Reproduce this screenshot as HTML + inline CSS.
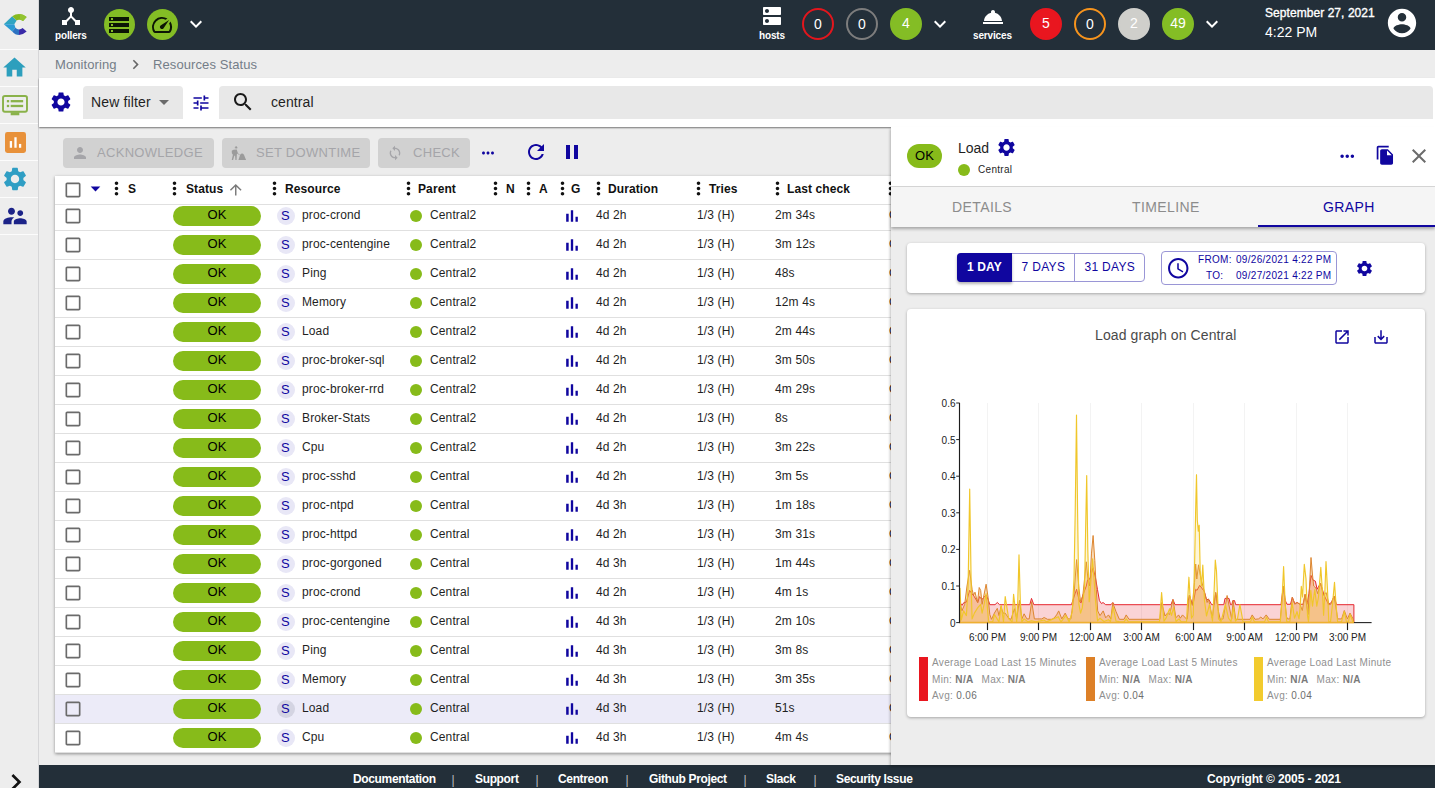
<!DOCTYPE html>
<html>
<head>
<meta charset="utf-8">
<title>Resources Status</title>
<style>
*{box-sizing:border-box;margin:0;padding:0}
html,body{width:1435px;height:788px;overflow:hidden;background:#ededed;font-family:"Liberation Sans",sans-serif;color:#242f3a}
.abs{position:absolute}
svg{display:block;position:absolute}
.t{position:absolute;white-space:nowrap;line-height:1}
/* sidebar */
#side{overflow:hidden;position:absolute;left:0;top:0;width:39px;height:788px;background:#ededed;border-right:1px solid #d6d6d8}
#side .sep{position:absolute;left:0;width:38px;height:1px;background:#fcfcfc}
/* header */
#hdr{position:absolute;left:39px;top:0;width:1396px;height:50px;background:#232f39}
.hl{color:#fff;font-size:10px;font-weight:700;letter-spacing:-.15px}
.cnt{position:absolute;width:32px;height:32px;border-radius:50%;color:#fff;font-size:14px;text-align:center;line-height:28px;border:2px solid transparent}
/* breadcrumb */
#bc{position:absolute;left:39px;top:50px;width:1396px;height:27px;background:#ededed}
#bc .t{font-size:13px;color:#747d88;letter-spacing:.1px}
/* filter */
#flt{position:absolute;left:39px;top:77.5px;width:1396px;height:49.5px;background:#fff;box-shadow:0 1px 1.5px rgba(0,0,0,.5)}
/* actions */
.btn{position:absolute;top:138px;height:30px;background:#d1d1d1;border-radius:4px}
.btn .t{font-size:13px;letter-spacing:.3px;color:#a5a5a9;top:7.5px}
/* table */
#tbl{position:absolute;left:55px;top:176px;width:840px;height:576.5px;background:#fff;box-shadow:0 1px 3px rgba(0,0,0,.4);overflow:hidden}
.row{position:absolute;left:0;width:840px;height:29px;border-bottom:1px solid #e0e0e0;background:#fff;font-size:12px;letter-spacing:.128px;color:#1f1f1f}
.row.sel{background:#ecebf8}
.row .t{top:7px}
.ok{position:absolute;left:118px;top:4px;width:88px;height:20px;border-radius:10px;background:#87bb1a;color:#000;font-size:13px;text-align:center;line-height:18px;letter-spacing:0}
.sc{position:absolute;left:221.5px;top:5px;width:18px;height:18px;border-radius:50%;background:#e8e7f6;color:#10069f;font-size:13px;text-align:center;line-height:17px;letter-spacing:0;text-indent:-.5px}
.row.sel .sc{background:#d4d4e2}
.dot{position:absolute;left:355px;top:8px;width:12px;height:12px;border-radius:50%;background:#87bb1a}
#th{position:absolute;left:0;top:0;width:840px;height:29px;background:#fff;border-bottom:1px solid #e0e0e0;z-index:2;font-size:12px;font-weight:700;color:#111}
#th .t{top:7px;letter-spacing:.1px}
/* panel */
#pnl{z-index:5;position:absolute;left:891px;top:127px;width:544px;height:638px;background:#ededed;box-shadow:-1px 2px 2.5px rgba(0,0,0,.25)}
#ph{position:absolute;left:0;top:0;width:544px;height:60px;background:#fff;border-bottom:1px solid #d8d8d8}
#tabs{position:absolute;left:0;top:60px;width:544px;height:40px;background:#f5f5f5;box-shadow:0 2px 3px rgba(0,0,0,.3)}
#tabs .t{font-size:14px;letter-spacing:.4px;color:#8c8c8c;top:13px}
.card{position:absolute;background:#fff;border-radius:4px;box-shadow:0 1px 3px rgba(0,0,0,.3)}
.lg{position:absolute;top:528.4px;font-size:10px;letter-spacing:.33px;line-height:16.5px;color:#8f8f8f;white-space:nowrap}
.lg b{color:#7a7a7a}
/* footer */
#ftr{position:absolute;left:39px;top:765px;width:1396px;height:23px;background:#232f39;color:#fff;font-weight:700;font-size:12px}
#ftr .t{top:8px;letter-spacing:-.35px}
</style>
</head>
<body>
<!--SIDEBAR-->
<div id="side">
  <!-- logo -->
  <svg style="left:0;top:0" width="39" height="49" viewBox="0 0 39 49"><path d="M3.81 24.37 L12.19 16.22 L16.60 20.56 L14.32 24.37 Z" fill="#2fa4c2"/><path d="M3.81 24.37 L14.32 24.37 L15.46 27.80 L12.19 31.38 Z" fill="#2a9bd4"/><path d="M12.19 31.38 L15.46 27.80 Q16.91 29.32 19.04 29.40 L19.04 34.88 Q15.23 34.88 12.19 31.38 Z" fill="#2d72c2"/><path d="M19.04 29.40 Q21.17 29.40 22.62 28.03 L26.66 31.61 Q23.23 34.88 19.04 34.88 Z" fill="#3a2aa8"/><path d="M12.19 16.22 Q15.23 13.94 19.04 13.94 Q23.23 13.94 26.66 16.91 L23.08 21.10 Q21.33 19.65 19.04 19.65 Q17.67 19.65 16.60 20.56 Z" fill="#86b91f"/><path d="M19.95 13.94 Q23.76 14.24 26.66 16.91 L23.08 21.10 Q21.71 19.80 19.95 19.65 Z" fill="#93c431"/></svg>
  <div class="sep" style="top:49px"></div>
  <!-- home -->
  <svg style="left:1.200px;top:53.700px" width="27" height="27" viewBox="0 0 24 24"><path fill="#2d9fbd" d="M10 20v-6h4v6h5v-8h3L12 3 2 12h3v8z"/></svg>
  <div class="sep" style="top:86px"></div>
  <!-- monitoring -->
  <svg style="left:2px;top:93.500px" width="26" height="23" viewBox="0 0 27 24">
    <rect x="1" y="2" width="25" height="16.5" rx="2" fill="none" stroke="#8ab24a" stroke-width="2"/>
    <rect x="9" y="19" width="9" height="3.2" fill="#8ab24a"/>
    <rect x="5" y="6.300" width="2.400" height="2.400" fill="#8ab24a"/><rect x="9" y="6.300" width="13" height="2.400" fill="#8ab24a"/>
    <rect x="5" y="11.300" width="2.400" height="2.400" fill="#8ab24a"/><rect x="9" y="11.300" width="13" height="2.400" fill="#8ab24a"/>
  </svg>
  <div class="sep" style="top:123px"></div>
  <!-- reporting -->
  <svg style="left:4.500px;top:131.500px" width="21" height="21" viewBox="0 0 22 22">
    <rect x="0" y="0" width="22" height="22" rx="2.500" fill="#e8913a"/>
    <rect x="5" y="9.500" width="2.400" height="7" fill="#fff"/><rect x="9.800" y="5.500" width="2.400" height="11" fill="#fff"/><rect x="14.600" y="12.500" width="2.400" height="4" fill="#fff"/>
  </svg>
  <div class="sep" style="top:160px"></div>
  <!-- config -->
  <svg style="left:1px;top:165px" width="28" height="28" viewBox="0 0 24 24"><path fill="#2f9ec4" d="M19.14 12.94c.04-.3.06-.61.06-.94 0-.32-.02-.64-.07-.94l2.03-1.58c.18-.14.23-.41.12-.61l-1.92-3.32c-.12-.22-.37-.29-.59-.22l-2.39.96c-.5-.38-1.03-.7-1.62-.94l-.36-2.54c-.04-.24-.24-.41-.48-.41h-3.84c-.24 0-.43.17-.47.41l-.36 2.54c-.59.24-1.13.57-1.62.94l-2.39-.96c-.22-.08-.47 0-.59.22L2.74 8.870c-.12.21-.08.47.12.61l2.030 1.580c-.05.3-.09.63-.09.94s.02.640.07.940l-2.030 1.580c-.18.140-.23.410-.12.610l1.920 3.320c.12.220.37.290.59.220l2.390-.960c.5.380 1.030.7 1.620.940l.36 2.540c.05.240.24.410.48.410h3.840c.24 0 .44-.170.470-.410l.36-2.540c.590-.240 1.130-.560 1.620-.940l2.390.960c.22.080.47 0 .59-.220l1.920-3.320c.12-.220.070-.470-.12-.610l-2.010-1.580zM12 15.600c-1.980 0-3.600-1.620-3.600-3.600s1.620-3.600 3.600-3.600 3.600 1.620 3.600 3.600-1.620 3.600-3.600 3.600z"/></svg>
  <div class="sep" style="top:197px"></div>
  <!-- admin -->
  <svg style="left:1px;top:202px" width="28" height="28" viewBox="0 0 24 24"><path fill="#1c2388" d="M16.500 12c1.380 0 2.490-1.120 2.490-2.500S17.880 7 16.500 7C15.120 7 14 8.120 14 9.500s1.120 2.500 2.500 2.500zM9 11c1.660 0 2.990-1.340 2.990-3S10.660 5 9 5C7.340 5 6 6.340 6 8s1.340 3 3 3zm7.500 3c-1.830 0-5.500.920-5.500 2.750V19h11v-2.250c0-1.830-3.670-2.750-5.500-2.750zM9 13c-2.330 0-7 1.170-7 3.500V19h7v-2.250c0-.850.330-2.340 2.370-3.470C10.500 13.100 9.660 13 9 13z"/></svg>
  <div class="sep" style="top:234px"></div>
  <!-- expand chevron -->
  <svg style="left:-.4px;top:765.500px" width="32" height="32" viewBox="0 0 24 24"><path fill="#111" d="M10 6L8.590 7.410 13.170 12l-4.580 4.590L10 18l6-6z"/></svg>
</div>

<!--HEADER-->
<div id="hdr">
  <!-- pollers -->
  <svg style="left:20px;top:4px" width="24" height="24" viewBox="0 0 24 24"><path fill="#fff" d="M17 16l-4-4V8.820C14.160 8.400 15 7.300 15 6c0-1.660-1.340-3-3-3S9 4.340 9 6c0 1.300.840 2.400 2 2.820V12l-4 4H3v5h5v-3.050l4-4.200 4 4.200V21h5v-5h-4z"/></svg>
  <span class="t hl" style="left:16px;top:30.500px">pollers</span>
  <div class="abs" style="left:65px;top:9px;width:31px;height:31px;border-radius:50%;background:#84bd25"></div>
  <svg style="left:68px;top:12.500px" width="24" height="24" viewBox="0 0 24 24"><path fill="#0c1505" d="M2 20h20v-4H2v4zm2-3h2v2H4v-2zM2 4v4h20V4H2zm4 3H4V5h2v2zm-4 7h20v-4H2v4zm2-3h2v2H4v-2z"/></svg>
  <div class="abs" style="left:108px;top:9px;width:31px;height:31px;border-radius:50%;background:#84bd25"></div>
  <svg style="left:111px;top:13.200px" width="24" height="24" viewBox="0 0 24 24"><path fill="#0c1505" d="M20.380 8.570l-1.230 1.850a8 8 0 0 1-.220 7.580H5.070A8 8 0 0 1 15.580 6.850l1.850-1.230A10 10 0 0 0 3.350 19a2 2 0 0 0 1.720 1h13.850a2 2 0 0 0 1.740-1 10 10 0 0 0-.270-10.440zm-9.790 6.840a2 2 0 0 0 2.830 0l5.660-8.490-8.490 5.660a2 2 0 0 0 0 2.830z"/></svg>
  <svg style="left:145px;top:12px" width="24" height="24" viewBox="0 0 24 24"><path fill="#fff" d="M16.590 8.590L12 13.170 7.410 8.590 6 10l6 6 6-6z"/></svg>
  <!-- hosts -->
  <svg style="left:721px;top:4px" width="24" height="24" viewBox="0 0 24 24"><path fill="#fff" d="M20 13H4c-.550 0-1 .450-1 1v6c0 .550.450 1 1 1h16c.550 0 1-.450 1-1v-6c0-.550-.450-1-1-1zM7 19c-1.100 0-2-.900-2-2s.900-2 2-2 2 .900 2 2-.900 2-2 2zM20 3H4c-.550 0-1 .450-1 1v6c0 .550.450 1 1 1h16c.550 0 1-.450 1-1V4c0-.550-.450-1-1-1zM7 9c-1.100 0-2-.900-2-2s.900-2 2-2 2 .900 2 2-.900 2-2 2z"/></svg>
  <span class="t hl" style="left:720px;top:30.500px">hosts</span>
  <div class="cnt" style="left:763px;top:8px;border-color:#e3161d">0</div>
  <div class="cnt" style="left:807px;top:8px;border-color:#7d7d7d">0</div>
  <div class="cnt" style="left:851px;top:8px;line-height:26px;background:#84bd25;border-color:#84bd25">4</div>
  <svg style="left:889px;top:12px" width="24" height="24" viewBox="0 0 24 24"><path fill="#fff" d="M16.590 8.590L12 13.170 7.410 8.590 6 10l6 6 6-6z"/></svg>
  <!-- services -->
  <svg style="left:942px;top:5px" width="24" height="24" viewBox="0 0 24 24"><path fill="#fff" d="M2 17h20v2H2zm11.840-9.210c.100-.240.160-.510.160-.790 0-1.100-.900-2-2-2s-2 .900-2 2c0 .280.060.550.160.790C6.250 8.600 3.270 11.930 3 16h18c-.270-4.070-3.250-7.400-7.160-8.210z"/></svg>
  <span class="t hl" style="left:934px;top:30.500px">services</span>
  <div class="cnt" style="left:991px;top:8px;line-height:26px;background:#e9161f;border-color:#e9161f">5</div>
  <div class="cnt" style="left:1035px;top:8px;border-color:#f7941d">0</div>
  <div class="cnt" style="left:1079px;top:8px;line-height:26px;background:#cfcfcb;border-color:#cfcfcb">2</div>
  <div class="cnt" style="left:1123px;top:8px;line-height:26px;background:#84bd25;border-color:#84bd25">49</div>
  <svg style="left:1161px;top:12px" width="24" height="24" viewBox="0 0 24 24"><path fill="#fff" d="M16.590 8.590L12 13.170 7.410 8.590 6 10l6 6 6-6z"/></svg>
  <!-- clock -->
  <span class="t" style="left:1226px;top:7px;font-size:12px;color:#fff;letter-spacing:.06px;-webkit-text-stroke:.35px #fff">September 27, 2021</span>
  <span class="t" style="left:1226px;top:25px;font-size:14px;color:#fff">4:22 PM</span>
  <svg style="left:1345.500px;top:5.500px" width="34" height="34" viewBox="0 0 24 24"><path fill="#fff" d="M12 2C6.480 2 2 6.480 2 12s4.480 10 10 10 10-4.480 10-10S17.520 2 12 2zm0 3c1.660 0 3 1.340 3 3s-1.340 3-3 3-3-1.340-3-3 1.340-3 3-3zm0 14.200c-2.500 0-4.710-1.280-6-3.220.030-1.990 4-3.080 6-3.080 1.990 0 5.970 1.090 6 3.080-1.290 1.940-3.500 3.220-6 3.220z"/></svg>
</div>

<!--BREADCRUMB-->
<div id="bc">
  <span class="t" style="left:16px;top:8px">Monitoring</span>
  <svg style="left:86.500px;top:4.500px" width="19" height="19" viewBox="0 0 24 24"><path fill="#666" d="M10 6L8.59 7.41 13.17 12l-4.58 4.59L10 18l6-6z"/></svg>
  <span class="t" style="left:114px;top:8px">Resources Status</span>
</div>
<!--FILTER-->
<div id="flt">
  <svg style="left:10px;top:12.5px" width="24" height="24" viewBox="0 0 24 24"><path fill="#10069f" d="M19.140 12.940c.040-.3.060-.610.060-.940 0-.320-.020-.640-.070-.940l2.030-1.580c.18-.14.23-.41.12-.61l-1.920-3.320c-.12-.22-.37-.29-.59-.22l-2.390.96c-.5-.38-1.030-.7-1.620-.94l-.36-2.540c-.04-.24-.24-.41-.48-.41h-3.840c-.24 0-.43.17-.47.41l-.36 2.540c-.59.24-1.130.57-1.620.94l-2.390-.96c-.22-.08-.47 0-.59.22L2.740 8.870c-.12.21-.08.47.12.61l2.030 1.580c-.05.3-.09.63-.09.94s.02.64.07.94l-2.030 1.580c-.18.14-.23.41-.12.610l1.920 3.320c.12.220.37.290.59.220l2.390-.960c.5.380 1.030.7 1.620.940l.36 2.540c.05.240.24.410.48.410h3.840c.24 0 .44-.170.470-.410l.36-2.540c.590-.240 1.130-.560 1.620-.940l2.390.960c.22.080.47 0 .59-.220l1.920-3.320c.12-.220.070-.470-.12-.610l-2.010-1.580zM12 15.600c-1.980 0-3.600-1.620-3.600-3.600s1.620-3.600 3.600-3.600 3.600 1.620 3.600 3.600-1.620 3.600-3.600 3.600z"/></svg>
  <div class="abs" style="left:44px;top:8.5px;width:100px;height:33px;background:#e8e8e8;border-radius:4px 4px 0 0"></div>
  <span class="t" style="left:52px;top:17.5px;font-size:14px;letter-spacing:.15px;color:#1f1f1f">New filter</span>
  <svg style="left:113px;top:12.5px" width="24" height="24" viewBox="0 0 24 24"><path fill="#6a6a6a" d="M7 10l5 5 5-5z"/></svg>
  <svg style="left:152px;top:15.300px" width="20" height="20" viewBox="0 0 24 24"><path fill="#10069f" d="M3 17v2h6v-2H3zM3 5v2h10V5H3zm10 16v-2h8v-2h-8v-2h-2v6h2zM7 9v2H3v2h4v2h2V9H7zm14 4v-2H11v2h10zm-6-4h2V7h4V5h-4V3h-2v6z"/></svg>
  <div class="abs" style="left:180px;top:8.5px;width:1213.500px;height:33px;background:#e8e8e8;border-radius:4px 4px 0 0"></div>
  <svg style="left:192px;top:12.5px" width="24" height="24" viewBox="0 0 24 24"><path fill="#1a1a1a" d="M15.500 14h-.790l-.280-.270C15.410 12.590 16 11.110 16 9.500 16 5.910 13.090 3 9.500 3S3 5.910 3 9.500 5.910 16 9.500 16c1.610 0 3.090-.590 4.230-1.570l.270.280v.790l5 4.990L20.490 19l-4.990-5zm-6 0C7.010 14 5 11.990 5 9.500S7.010 5 9.500 5 14 7.010 14 9.500 11.990 14 9.500 14z"/></svg>
  <span class="t" style="left:232px;top:17.5px;font-size:14px;color:#1f1f1f;letter-spacing:.1px">central</span>
</div>

<!--ACTIONS-->
<div id="act">
  <div class="btn" style="left:63px;width:151px">
    <svg style="left:8px;top:6px" width="18" height="18" viewBox="0 0 24 24"><path fill="#a5a5a9" d="M12 12c2.210 0 4-1.790 4-4s-1.790-4-4-4-4 1.790-4 4 1.790 4 4 4zm0 2c-2.670 0-8 1.340-8 4v2h16v-2c0-2.660-5.330-4-8-4z"/></svg>
    <span class="t" style="left:34px">ACKNOWLEDGE</span>
  </div>
  <div class="btn" style="left:222px;width:148px">
    <svg style="left:9.300px;top:7.700px" width="15.400" height="14.300" viewBox="285 275 270 250"><g fill="#9b9b9b"><ellipse cx="375" cy="300" rx="17" ry="20"/><rect x="348" y="303" width="56" height="9"/><path d="M330 340L385 335L405 398L388 420L383 520L362 520L357 445L343 445L322 520L298 520L318 430L300 402L298 360Z"/><path d="M395 392L440 428L435 436L390 402Z"/><path d="M415 520L446 430Q480 385 512 430L550 520Z"/></g></svg>
    <span class="t" style="left:34px">SET DOWNTIME</span>
  </div>
  <div class="btn" style="left:378px;width:92px">
    <svg style="left:9px;top:7px" width="16" height="16" viewBox="0 0 24 24"><path fill="#a5a5a9" d="M12 4V1L8 5l4 4V6c3.310 0 6 2.690 6 6 0 1.010-.250 1.970-.7 2.800l1.460 1.460C19.540 15.030 20 13.570 20 12c0-4.420-3.580-8-8-8zm0 14c-3.310 0-6-2.690-6-6 0-1.010.250-1.970.7-2.800L5.240 7.740C4.460 8.970 4 10.430 4 12c0 4.420 3.580 8 8 8v3l4-4-4-4v3z"/></svg>
    <span class="t" style="left:35px">CHECK</span>
  </div>
  <svg style="left:479px;top:144px" width="18" height="18" viewBox="0 0 24 24"><path fill="#10069f" d="M6 10c-1.100 0-2 .900-2 2s.900 2 2 2 2-.900 2-2-.900-2-2-2zm12 0c-1.100 0-2 .900-2 2s.900 2 2 2 2-.900 2-2-.900-2-2-2zm-6 0c-1.100 0-2 .900-2 2s.900 2 2 2 2-.900 2-2-.900-2-2-2z"/></svg>
  <svg style="left:524px;top:140px" width="24" height="24" viewBox="0 0 24 24"><path fill="#10069f" d="M17.650 6.350C16.200 4.900 14.210 4 12 4c-4.420 0-7.990 3.580-7.990 8s3.570 8 7.990 8c3.730 0 6.840-2.550 7.730-6h-2.080c-.820 2.330-3.040 4-5.650 4-3.310 0-6-2.690-6-6s2.690-6 6-6c1.660 0 3.140.690 4.220 1.780L13 11h7V4l-2.350 2.350z"/></svg>
  <svg style="left:560px;top:140px" width="24" height="24" viewBox="0 0 24 24"><path fill="#10069f" d="M6 19h4V5H6v14zm8-14v14h4V5h-4z"/></svg>
</div>

<!--TABLE-->
<div id="tbl"><div id="th"><svg style="left:8px;top:4px" width="20" height="20" viewBox="0 0 24 24"><path fill="#6b6b6b" d="M19 5v14H5V5h14m0-2H5c-1.100 0-2 .900-2 2v14c0 1.100.900 2 2 2h14c1.100 0 2-.900 2-2V5c0-1.100-.900-2-2-2z"/></svg><svg style="left:28.5px;top:0.5px" width="23" height="23" viewBox="0 0 24 24"><path fill="#10069f" d="M7 10l5 5 5-5z"/></svg><svg style="left:50.8px;top:1.5px" width="21" height="21" viewBox="0 0 24 24"><path fill="#111" d="M12 8c1.100 0 2-.900 2-2s-.900-2-2-2-2 .900-2 2 .900 2 2 2zm0 2c-1.100 0-2 .900-2 2s.900 2 2 2 2-.900 2-2-.900-2-2-2zm0 6c-1.100 0-2 .900-2 2s.900 2 2 2 2-.900 2-2-.900-2-2-2z"/></svg><span class="t" style="left:73px">S</span><svg style="left:108.80000000000001px;top:1.5px" width="21" height="21" viewBox="0 0 24 24"><path fill="#111" d="M12 8c1.100 0 2-.900 2-2s-.900-2-2-2-2 .900-2 2 .900 2 2 2zm0 2c-1.100 0-2 .900-2 2s.900 2 2 2 2-.900 2-2-.900-2-2-2zm0 6c-1.100 0-2 .900-2 2s.900 2 2 2 2-.900 2-2-.900-2-2-2z"/></svg><span class="t" style="left:131px">Status</span><svg style="left:208.5px;top:1.5px" width="21" height="21" viewBox="0 0 24 24"><path fill="#111" d="M12 8c1.100 0 2-.900 2-2s-.900-2-2-2-2 .900-2 2 .900 2 2 2zm0 2c-1.100 0-2 .900-2 2s.900 2 2 2 2-.900 2-2-.900-2-2-2zm0 6c-1.100 0-2 .900-2 2s.900 2 2 2 2-.900 2-2-.900-2-2-2z"/></svg><span class="t" style="left:230px">Resource</span><svg style="left:342.5px;top:1.5px" width="21" height="21" viewBox="0 0 24 24"><path fill="#111" d="M12 8c1.100 0 2-.900 2-2s-.900-2-2-2-2 .900-2 2 .900 2 2 2zm0 2c-1.100 0-2 .900-2 2s.900 2 2 2 2-.900 2-2-.900-2-2-2zm0 6c-1.100 0-2 .900-2 2s.900 2 2 2 2-.900 2-2-.900-2-2-2z"/></svg><span class="t" style="left:363px">Parent</span><svg style="left:430.0px;top:1.5px" width="21" height="21" viewBox="0 0 24 24"><path fill="#111" d="M12 8c1.100 0 2-.900 2-2s-.900-2-2-2-2 .900-2 2 .900 2 2 2zm0 2c-1.100 0-2 .900-2 2s.900 2 2 2 2-.900 2-2-.900-2-2-2zm0 6c-1.100 0-2 .900-2 2s.900 2 2 2 2-.900 2-2-.900-2-2-2z"/></svg><span class="t" style="left:451px">N</span><svg style="left:463.1px;top:1.5px" width="21" height="21" viewBox="0 0 24 24"><path fill="#111" d="M12 8c1.100 0 2-.900 2-2s-.900-2-2-2-2 .900-2 2 .900 2 2 2zm0 2c-1.100 0-2 .900-2 2s.900 2 2 2 2-.900 2-2-.900-2-2-2zm0 6c-1.100 0-2 .900-2 2s.900 2 2 2 2-.900 2-2-.900-2-2-2z"/></svg><span class="t" style="left:484px">A</span><svg style="left:496.5px;top:1.5px" width="21" height="21" viewBox="0 0 24 24"><path fill="#111" d="M12 8c1.100 0 2-.900 2-2s-.900-2-2-2-2 .900-2 2 .900 2 2 2zm0 2c-1.100 0-2 .900-2 2s.900 2 2 2 2-.900 2-2-.900-2-2-2zm0 6c-1.100 0-2 .900-2 2s.900 2 2 2 2-.900 2-2-.900-2-2-2z"/></svg><span class="t" style="left:516px">G</span><svg style="left:532.7px;top:1.5px" width="21" height="21" viewBox="0 0 24 24"><path fill="#111" d="M12 8c1.100 0 2-.900 2-2s-.900-2-2-2-2 .900-2 2 .900 2 2 2zm0 2c-1.100 0-2 .900-2 2s.900 2 2 2 2-.900 2-2-.900-2-2-2zm0 6c-1.100 0-2 .900-2 2s.900 2 2 2 2-.900 2-2-.900-2-2-2z"/></svg><span class="t" style="left:553px">Duration</span><svg style="left:632.5px;top:1.5px" width="21" height="21" viewBox="0 0 24 24"><path fill="#111" d="M12 8c1.100 0 2-.900 2-2s-.900-2-2-2-2 .900-2 2 .900 2 2 2zm0 2c-1.100 0-2 .900-2 2s.900 2 2 2 2-.900 2-2-.900-2-2-2zm0 6c-1.100 0-2 .900-2 2s.900 2 2 2 2-.900 2-2-.900-2-2-2z"/></svg><span class="t" style="left:654px">Tries</span><svg style="left:711.8px;top:1.5px" width="21" height="21" viewBox="0 0 24 24"><path fill="#111" d="M12 8c1.100 0 2-.900 2-2s-.900-2-2-2-2 .900-2 2 .900 2 2 2zm0 2c-1.100 0-2 .900-2 2s.900 2 2 2 2-.900 2-2-.900-2-2-2zm0 6c-1.100 0-2 .900-2 2s.900 2 2 2 2-.900 2-2-.900-2-2-2z"/></svg><span class="t" style="left:732px">Last check</span><svg style="left:824.8px;top:1.5px" width="21" height="21" viewBox="0 0 24 24"><path fill="#111" d="M12 8c1.100 0 2-.900 2-2s-.900-2-2-2-2 .900-2 2 .900 2 2 2zm0 2c-1.100 0-2 .900-2 2s.900 2 2 2 2-.900 2-2-.900-2-2-2zm0 6c-1.100 0-2 .900-2 2s.900 2 2 2 2-.900 2-2-.900-2-2-2z"/></svg><svg style="left:172.25px;top:5.2px" width="17.5" height="17.5" viewBox="0 0 24 24"><path fill="#7a7a7a" d="M4 12l1.410 1.410L11 7.830V20h2V7.830l5.580 5.590L20 12l-8-8-8 8z"/></svg></div><div class="row" style="top:25.5px"><svg style="left:8px;top:4px" width="20" height="20" viewBox="0 0 24 24"><path fill="#6b6b6b" d="M19 5v14H5V5h14m0-2H5c-1.100 0-2 .900-2 2v14c0 1.100.900 2 2 2h14c1.100 0 2-.900 2-2V5c0-1.100-.900-2-2-2z"/></svg><div class="ok">OK</div><div class="sc">S</div><span class="t" style="left:247px">proc-crond</span><div class="dot"></div><span class="t" style="left:375px">Central2</span><svg style="left:506.70000000000005px;top:4px" width="20" height="20" viewBox="0 0 24 24"><path fill="#10069f" d="M5 9.200h3V19H5zM10.600 5h2.800v14h-2.800zm5.600 8H19v6h-2.800z"/></svg><span class="t" style="left:541px">4d 2h</span><span class="t" style="left:642px">1/3 (H)</span><span class="t" style="left:720px">2m 34s</span><span class="t" style="left:834px">OK</span></div><div class="row" style="top:54.5px"><svg style="left:8px;top:4px" width="20" height="20" viewBox="0 0 24 24"><path fill="#6b6b6b" d="M19 5v14H5V5h14m0-2H5c-1.100 0-2 .900-2 2v14c0 1.100.900 2 2 2h14c1.100 0 2-.900 2-2V5c0-1.100-.900-2-2-2z"/></svg><div class="ok">OK</div><div class="sc">S</div><span class="t" style="left:247px">proc-centengine</span><div class="dot"></div><span class="t" style="left:375px">Central2</span><svg style="left:506.70000000000005px;top:4px" width="20" height="20" viewBox="0 0 24 24"><path fill="#10069f" d="M5 9.200h3V19H5zM10.600 5h2.800v14h-2.800zm5.600 8H19v6h-2.800z"/></svg><span class="t" style="left:541px">4d 2h</span><span class="t" style="left:642px">1/3 (H)</span><span class="t" style="left:720px">3m 12s</span><span class="t" style="left:834px">OK</span></div><div class="row" style="top:83.5px"><svg style="left:8px;top:4px" width="20" height="20" viewBox="0 0 24 24"><path fill="#6b6b6b" d="M19 5v14H5V5h14m0-2H5c-1.100 0-2 .900-2 2v14c0 1.100.900 2 2 2h14c1.100 0 2-.900 2-2V5c0-1.100-.900-2-2-2z"/></svg><div class="ok">OK</div><div class="sc">S</div><span class="t" style="left:247px">Ping</span><div class="dot"></div><span class="t" style="left:375px">Central2</span><svg style="left:506.70000000000005px;top:4px" width="20" height="20" viewBox="0 0 24 24"><path fill="#10069f" d="M5 9.200h3V19H5zM10.600 5h2.800v14h-2.800zm5.600 8H19v6h-2.800z"/></svg><span class="t" style="left:541px">4d 2h</span><span class="t" style="left:642px">1/3 (H)</span><span class="t" style="left:720px">48s</span><span class="t" style="left:834px">OK</span></div><div class="row" style="top:112.5px"><svg style="left:8px;top:4px" width="20" height="20" viewBox="0 0 24 24"><path fill="#6b6b6b" d="M19 5v14H5V5h14m0-2H5c-1.100 0-2 .900-2 2v14c0 1.100.900 2 2 2h14c1.100 0 2-.900 2-2V5c0-1.100-.900-2-2-2z"/></svg><div class="ok">OK</div><div class="sc">S</div><span class="t" style="left:247px">Memory</span><div class="dot"></div><span class="t" style="left:375px">Central2</span><svg style="left:506.70000000000005px;top:4px" width="20" height="20" viewBox="0 0 24 24"><path fill="#10069f" d="M5 9.200h3V19H5zM10.600 5h2.800v14h-2.800zm5.600 8H19v6h-2.800z"/></svg><span class="t" style="left:541px">4d 2h</span><span class="t" style="left:642px">1/3 (H)</span><span class="t" style="left:720px">12m 4s</span><span class="t" style="left:834px">OK</span></div><div class="row" style="top:141.5px"><svg style="left:8px;top:4px" width="20" height="20" viewBox="0 0 24 24"><path fill="#6b6b6b" d="M19 5v14H5V5h14m0-2H5c-1.100 0-2 .900-2 2v14c0 1.100.900 2 2 2h14c1.100 0 2-.900 2-2V5c0-1.100-.900-2-2-2z"/></svg><div class="ok">OK</div><div class="sc">S</div><span class="t" style="left:247px">Load</span><div class="dot"></div><span class="t" style="left:375px">Central2</span><svg style="left:506.70000000000005px;top:4px" width="20" height="20" viewBox="0 0 24 24"><path fill="#10069f" d="M5 9.200h3V19H5zM10.600 5h2.800v14h-2.800zm5.600 8H19v6h-2.800z"/></svg><span class="t" style="left:541px">4d 2h</span><span class="t" style="left:642px">1/3 (H)</span><span class="t" style="left:720px">2m 44s</span><span class="t" style="left:834px">OK</span></div><div class="row" style="top:170.5px"><svg style="left:8px;top:4px" width="20" height="20" viewBox="0 0 24 24"><path fill="#6b6b6b" d="M19 5v14H5V5h14m0-2H5c-1.100 0-2 .900-2 2v14c0 1.100.900 2 2 2h14c1.100 0 2-.900 2-2V5c0-1.100-.900-2-2-2z"/></svg><div class="ok">OK</div><div class="sc">S</div><span class="t" style="left:247px">proc-broker-sql</span><div class="dot"></div><span class="t" style="left:375px">Central2</span><svg style="left:506.70000000000005px;top:4px" width="20" height="20" viewBox="0 0 24 24"><path fill="#10069f" d="M5 9.200h3V19H5zM10.600 5h2.800v14h-2.800zm5.600 8H19v6h-2.800z"/></svg><span class="t" style="left:541px">4d 2h</span><span class="t" style="left:642px">1/3 (H)</span><span class="t" style="left:720px">3m 50s</span><span class="t" style="left:834px">OK</span></div><div class="row" style="top:199.5px"><svg style="left:8px;top:4px" width="20" height="20" viewBox="0 0 24 24"><path fill="#6b6b6b" d="M19 5v14H5V5h14m0-2H5c-1.100 0-2 .900-2 2v14c0 1.100.900 2 2 2h14c1.100 0 2-.900 2-2V5c0-1.100-.900-2-2-2z"/></svg><div class="ok">OK</div><div class="sc">S</div><span class="t" style="left:247px">proc-broker-rrd</span><div class="dot"></div><span class="t" style="left:375px">Central2</span><svg style="left:506.70000000000005px;top:4px" width="20" height="20" viewBox="0 0 24 24"><path fill="#10069f" d="M5 9.200h3V19H5zM10.600 5h2.800v14h-2.800zm5.600 8H19v6h-2.800z"/></svg><span class="t" style="left:541px">4d 2h</span><span class="t" style="left:642px">1/3 (H)</span><span class="t" style="left:720px">4m 29s</span><span class="t" style="left:834px">OK</span></div><div class="row" style="top:228.5px"><svg style="left:8px;top:4px" width="20" height="20" viewBox="0 0 24 24"><path fill="#6b6b6b" d="M19 5v14H5V5h14m0-2H5c-1.100 0-2 .900-2 2v14c0 1.100.900 2 2 2h14c1.100 0 2-.900 2-2V5c0-1.100-.900-2-2-2z"/></svg><div class="ok">OK</div><div class="sc">S</div><span class="t" style="left:247px">Broker-Stats</span><div class="dot"></div><span class="t" style="left:375px">Central2</span><svg style="left:506.70000000000005px;top:4px" width="20" height="20" viewBox="0 0 24 24"><path fill="#10069f" d="M5 9.200h3V19H5zM10.600 5h2.800v14h-2.800zm5.600 8H19v6h-2.800z"/></svg><span class="t" style="left:541px">4d 2h</span><span class="t" style="left:642px">1/3 (H)</span><span class="t" style="left:720px">8s</span><span class="t" style="left:834px">OK</span></div><div class="row" style="top:257.5px"><svg style="left:8px;top:4px" width="20" height="20" viewBox="0 0 24 24"><path fill="#6b6b6b" d="M19 5v14H5V5h14m0-2H5c-1.100 0-2 .900-2 2v14c0 1.100.900 2 2 2h14c1.100 0 2-.900 2-2V5c0-1.100-.900-2-2-2z"/></svg><div class="ok">OK</div><div class="sc">S</div><span class="t" style="left:247px">Cpu</span><div class="dot"></div><span class="t" style="left:375px">Central2</span><svg style="left:506.70000000000005px;top:4px" width="20" height="20" viewBox="0 0 24 24"><path fill="#10069f" d="M5 9.200h3V19H5zM10.600 5h2.800v14h-2.800zm5.600 8H19v6h-2.800z"/></svg><span class="t" style="left:541px">4d 2h</span><span class="t" style="left:642px">1/3 (H)</span><span class="t" style="left:720px">3m 22s</span><span class="t" style="left:834px">OK</span></div><div class="row" style="top:286.5px"><svg style="left:8px;top:4px" width="20" height="20" viewBox="0 0 24 24"><path fill="#6b6b6b" d="M19 5v14H5V5h14m0-2H5c-1.100 0-2 .900-2 2v14c0 1.100.900 2 2 2h14c1.100 0 2-.900 2-2V5c0-1.100-.900-2-2-2z"/></svg><div class="ok">OK</div><div class="sc">S</div><span class="t" style="left:247px">proc-sshd</span><div class="dot"></div><span class="t" style="left:375px">Central</span><svg style="left:506.70000000000005px;top:4px" width="20" height="20" viewBox="0 0 24 24"><path fill="#10069f" d="M5 9.200h3V19H5zM10.600 5h2.800v14h-2.800zm5.600 8H19v6h-2.800z"/></svg><span class="t" style="left:541px">4d 2h</span><span class="t" style="left:642px">1/3 (H)</span><span class="t" style="left:720px">3m 5s</span><span class="t" style="left:834px">OK</span></div><div class="row" style="top:315.5px"><svg style="left:8px;top:4px" width="20" height="20" viewBox="0 0 24 24"><path fill="#6b6b6b" d="M19 5v14H5V5h14m0-2H5c-1.100 0-2 .900-2 2v14c0 1.100.900 2 2 2h14c1.100 0 2-.900 2-2V5c0-1.100-.900-2-2-2z"/></svg><div class="ok">OK</div><div class="sc">S</div><span class="t" style="left:247px">proc-ntpd</span><div class="dot"></div><span class="t" style="left:375px">Central</span><svg style="left:506.70000000000005px;top:4px" width="20" height="20" viewBox="0 0 24 24"><path fill="#10069f" d="M5 9.200h3V19H5zM10.600 5h2.800v14h-2.800zm5.600 8H19v6h-2.800z"/></svg><span class="t" style="left:541px">4d 3h</span><span class="t" style="left:642px">1/3 (H)</span><span class="t" style="left:720px">1m 18s</span><span class="t" style="left:834px">OK</span></div><div class="row" style="top:344.5px"><svg style="left:8px;top:4px" width="20" height="20" viewBox="0 0 24 24"><path fill="#6b6b6b" d="M19 5v14H5V5h14m0-2H5c-1.100 0-2 .900-2 2v14c0 1.100.900 2 2 2h14c1.100 0 2-.900 2-2V5c0-1.100-.900-2-2-2z"/></svg><div class="ok">OK</div><div class="sc">S</div><span class="t" style="left:247px">proc-httpd</span><div class="dot"></div><span class="t" style="left:375px">Central</span><svg style="left:506.70000000000005px;top:4px" width="20" height="20" viewBox="0 0 24 24"><path fill="#10069f" d="M5 9.200h3V19H5zM10.600 5h2.800v14h-2.800zm5.600 8H19v6h-2.800z"/></svg><span class="t" style="left:541px">4d 2h</span><span class="t" style="left:642px">1/3 (H)</span><span class="t" style="left:720px">3m 31s</span><span class="t" style="left:834px">OK</span></div><div class="row" style="top:373.5px"><svg style="left:8px;top:4px" width="20" height="20" viewBox="0 0 24 24"><path fill="#6b6b6b" d="M19 5v14H5V5h14m0-2H5c-1.100 0-2 .900-2 2v14c0 1.100.900 2 2 2h14c1.100 0 2-.900 2-2V5c0-1.100-.900-2-2-2z"/></svg><div class="ok">OK</div><div class="sc">S</div><span class="t" style="left:247px">proc-gorgoned</span><div class="dot"></div><span class="t" style="left:375px">Central</span><svg style="left:506.70000000000005px;top:4px" width="20" height="20" viewBox="0 0 24 24"><path fill="#10069f" d="M5 9.200h3V19H5zM10.600 5h2.800v14h-2.800zm5.600 8H19v6h-2.800z"/></svg><span class="t" style="left:541px">4d 3h</span><span class="t" style="left:642px">1/3 (H)</span><span class="t" style="left:720px">1m 44s</span><span class="t" style="left:834px">OK</span></div><div class="row" style="top:402.5px"><svg style="left:8px;top:4px" width="20" height="20" viewBox="0 0 24 24"><path fill="#6b6b6b" d="M19 5v14H5V5h14m0-2H5c-1.100 0-2 .900-2 2v14c0 1.100.900 2 2 2h14c1.100 0 2-.900 2-2V5c0-1.100-.900-2-2-2z"/></svg><div class="ok">OK</div><div class="sc">S</div><span class="t" style="left:247px">proc-crond</span><div class="dot"></div><span class="t" style="left:375px">Central</span><svg style="left:506.70000000000005px;top:4px" width="20" height="20" viewBox="0 0 24 24"><path fill="#10069f" d="M5 9.200h3V19H5zM10.600 5h2.800v14h-2.800zm5.600 8H19v6h-2.800z"/></svg><span class="t" style="left:541px">4d 2h</span><span class="t" style="left:642px">1/3 (H)</span><span class="t" style="left:720px">4m 1s</span><span class="t" style="left:834px">OK</span></div><div class="row" style="top:431.5px"><svg style="left:8px;top:4px" width="20" height="20" viewBox="0 0 24 24"><path fill="#6b6b6b" d="M19 5v14H5V5h14m0-2H5c-1.100 0-2 .900-2 2v14c0 1.100.900 2 2 2h14c1.100 0 2-.900 2-2V5c0-1.100-.900-2-2-2z"/></svg><div class="ok">OK</div><div class="sc">S</div><span class="t" style="left:247px">proc-centengine</span><div class="dot"></div><span class="t" style="left:375px">Central</span><svg style="left:506.70000000000005px;top:4px" width="20" height="20" viewBox="0 0 24 24"><path fill="#10069f" d="M5 9.200h3V19H5zM10.600 5h2.800v14h-2.800zm5.600 8H19v6h-2.800z"/></svg><span class="t" style="left:541px">4d 3h</span><span class="t" style="left:642px">1/3 (H)</span><span class="t" style="left:720px">2m 10s</span><span class="t" style="left:834px">OK</span></div><div class="row" style="top:460.5px"><svg style="left:8px;top:4px" width="20" height="20" viewBox="0 0 24 24"><path fill="#6b6b6b" d="M19 5v14H5V5h14m0-2H5c-1.100 0-2 .900-2 2v14c0 1.100.900 2 2 2h14c1.100 0 2-.900 2-2V5c0-1.100-.900-2-2-2z"/></svg><div class="ok">OK</div><div class="sc">S</div><span class="t" style="left:247px">Ping</span><div class="dot"></div><span class="t" style="left:375px">Central</span><svg style="left:506.70000000000005px;top:4px" width="20" height="20" viewBox="0 0 24 24"><path fill="#10069f" d="M5 9.200h3V19H5zM10.600 5h2.800v14h-2.800zm5.600 8H19v6h-2.800z"/></svg><span class="t" style="left:541px">4d 3h</span><span class="t" style="left:642px">1/3 (H)</span><span class="t" style="left:720px">3m 8s</span><span class="t" style="left:834px">OK</span></div><div class="row" style="top:489.5px"><svg style="left:8px;top:4px" width="20" height="20" viewBox="0 0 24 24"><path fill="#6b6b6b" d="M19 5v14H5V5h14m0-2H5c-1.100 0-2 .900-2 2v14c0 1.100.900 2 2 2h14c1.100 0 2-.900 2-2V5c0-1.100-.900-2-2-2z"/></svg><div class="ok">OK</div><div class="sc">S</div><span class="t" style="left:247px">Memory</span><div class="dot"></div><span class="t" style="left:375px">Central</span><svg style="left:506.70000000000005px;top:4px" width="20" height="20" viewBox="0 0 24 24"><path fill="#10069f" d="M5 9.200h3V19H5zM10.600 5h2.800v14h-2.800zm5.600 8H19v6h-2.800z"/></svg><span class="t" style="left:541px">4d 3h</span><span class="t" style="left:642px">1/3 (H)</span><span class="t" style="left:720px">3m 35s</span><span class="t" style="left:834px">OK</span></div><div class="row sel" style="top:518.5px"><svg style="left:8px;top:4px" width="20" height="20" viewBox="0 0 24 24"><path fill="#6b6b6b" d="M19 5v14H5V5h14m0-2H5c-1.100 0-2 .900-2 2v14c0 1.100.900 2 2 2h14c1.100 0 2-.900 2-2V5c0-1.100-.900-2-2-2z"/></svg><div class="ok">OK</div><div class="sc">S</div><span class="t" style="left:247px">Load</span><div class="dot"></div><span class="t" style="left:375px">Central</span><svg style="left:506.70000000000005px;top:4px" width="20" height="20" viewBox="0 0 24 24"><path fill="#10069f" d="M5 9.200h3V19H5zM10.600 5h2.800v14h-2.800zm5.600 8H19v6h-2.800z"/></svg><span class="t" style="left:541px">4d 3h</span><span class="t" style="left:642px">1/3 (H)</span><span class="t" style="left:720px">51s</span><span class="t" style="left:834px">OK</span></div><div class="row" style="top:547.5px"><svg style="left:8px;top:4px" width="20" height="20" viewBox="0 0 24 24"><path fill="#6b6b6b" d="M19 5v14H5V5h14m0-2H5c-1.100 0-2 .900-2 2v14c0 1.100.900 2 2 2h14c1.100 0 2-.900 2-2V5c0-1.100-.900-2-2-2z"/></svg><div class="ok">OK</div><div class="sc">S</div><span class="t" style="left:247px">Cpu</span><div class="dot"></div><span class="t" style="left:375px">Central</span><svg style="left:506.70000000000005px;top:4px" width="20" height="20" viewBox="0 0 24 24"><path fill="#10069f" d="M5 9.200h3V19H5zM10.600 5h2.800v14h-2.800zm5.600 8H19v6h-2.800z"/></svg><span class="t" style="left:541px">4d 3h</span><span class="t" style="left:642px">1/3 (H)</span><span class="t" style="left:720px">4m 4s</span><span class="t" style="left:834px">OK</span></div></div>
<!--PANEL-->
<div id="pnl">
  <div class="abs" style="left:0;top:100px;width:544px;height:538px;background:#ededed"></div>
  <!-- cards -->
  <div class="card" style="left:16px;top:116px;width:518px;height:50px"></div>
  <div class="card" style="left:16px;top:182px;width:518px;height:408px"></div>
  <!-- header -->
  <div id="ph">
    <div class="abs" style="left:16px;top:17px;width:35px;height:24px;border-radius:12px;background:#87bb1a;color:#000;font-size:13px;text-align:center;line-height:24px">OK</div>
    <span class="t" style="left:67px;top:14px;font-size:14px;color:#1f1f1f">Load</span>
    <svg style="left:105.300px;top:10.400px" width="21" height="21" viewBox="0 0 24 24"><path fill="#10069f" d="M19.140 12.940c.040-.3.060-.610.060-.940 0-.320-.020-.640-.070-.940l2.030-1.580c.18-.14.23-.41.12-.61l-1.920-3.320c-.12-.22-.37-.29-.59-.22l-2.390.96c-.5-.38-1.030-.7-1.620-.94l-.36-2.540c-.04-.24-.24-.41-.48-.41h-3.840c-.24 0-.43.17-.47.41l-.36 2.540c-.59.24-1.130.57-1.620.94l-2.390-.96c-.22-.08-.47 0-.59.22L2.740 8.870c-.12.21-.08.47.12.61l2.030 1.580c-.05.3-.09.63-.09.94s.02.64.07.94l-2.030 1.580c-.18.14-.23.41-.12.610l1.920 3.320c.12.220.37.290.59.220l2.390-.960c.5.380 1.030.7 1.620.940l.36 2.540c.05.240.24.410.48.410h3.840c.24 0 .44-.170.470-.410l.36-2.540c.590-.240 1.130-.560 1.620-.940l2.390.960c.22.080.47 0 .59-.220l1.920-3.320c.12-.220.070-.470-.12-.610l-2.010-1.580zM12 15.600c-1.980 0-3.600-1.620-3.600-3.600s1.620-3.600 3.600-3.600 3.600 1.620 3.600 3.600-1.620 3.600-3.600 3.600z"/></svg>
    <div class="abs" style="left:67px;top:37px;width:12px;height:12px;border-radius:50%;background:#87bb1a"></div>
    <span class="t" style="left:87px;top:38px;font-size:10px;letter-spacing:.3px;color:#1f1f1f">Central</span>
    <svg style="left:445.750px;top:18.750px" width="20.500" height="20.500" viewBox="0 0 24 24"><path fill="#10069f" d="M6 10c-1.100 0-2 .900-2 2s.900 2 2 2 2-.900 2-2-.900-2-2-2zm12 0c-1.100 0-2 .900-2 2s.900 2 2 2 2-.900 2-2-.900-2-2-2zm-6 0c-1.100 0-2 .900-2 2s.900 2 2 2 2-.900 2-2-.900-2-2-2z"/></svg>
    <svg style="left:484px;top:18.400px" width="20.600" height="20.600" viewBox="0 0 24 24"><path fill="#10069f" d="M16 1H4c-1.100 0-2 .900-2 2v14h2V3h12V1zm-1 4l6 6v10c0 1.100-.900 2-2 2H7.990C6.890 23 6 22.100 6 21l.010-14c0-1.100.890-2 1.990-2h7zm-1 7h5.500L14 6.500V12z"/></svg>
    <svg style="left:516px;top:17px" width="24" height="24" viewBox="0 0 24 24"><path fill="#6b6b6b" d="M19 6.410L17.590 5 12 10.590 6.410 5 5 6.410 10.590 12 5 17.590 6.410 19 12 13.410 17.590 19 19 17.590 13.410 12z"/></svg>
  </div>
  <!-- tabs -->
  <div id="tabs">
    <span class="t" style="left:61px">DETAILS</span>
    <span class="t" style="left:241px">TIMELINE</span>
    <span class="t" style="left:432px;color:#10069f">GRAPH</span>
    <div class="abs" style="left:367px;top:38px;width:177px;height:2px;background:#10069f"></div>
  </div>
  <!-- period -->
  <div class="abs" style="left:66px;top:126px;width:188px;height:29px;border:1px solid #9a96d6;border-radius:4px;background:#fff"></div>
  <div class="abs" style="left:66px;top:126px;width:55px;height:29px;background:#10069f;border-radius:4px 0 0 4px;box-shadow:0 2px 3px rgba(0,0,0,.3)"></div>
  <div class="abs" style="left:183px;top:127px;width:1px;height:27px;background:#9a96d6"></div>
  <span class="t" style="left:76px;top:133.700px;font-size:12px;font-weight:700;color:#fff;letter-spacing:.1px">1 DAY</span>
  <span class="t" style="left:130.600px;top:133.700px;font-size:12px;color:#10069f;letter-spacing:.3px">7 DAYS</span>
  <span class="t" style="left:193.500px;top:133.700px;font-size:12px;color:#10069f;letter-spacing:.3px">31 DAYS</span>
  <div class="abs" style="left:270px;top:124px;width:176px;height:34px;border:1px solid #9a96d6;border-radius:4px;background:#fff"></div>
  <svg style="left:274.750px;top:129px" width="24.500" height="24.500" viewBox="0 0 24 24"><path fill="#10069f" d="M11.990 2C6.470 2 2 6.480 2 12s4.470 10 9.990 10C17.520 22 22 17.520 22 12S17.520 2 11.990 2zM12 20c-4.420 0-8-3.580-8-8s3.580-8 8-8 8 3.580 8 8-3.580 8-8 8zm.5-13H11v6l5.250 3.150.75-1.230-4.500-2.670z"/></svg>
  <span class="t" style="left:307px;top:128px;font-size:10px;letter-spacing:.3px;color:#10069f">FROM:</span>
  <span class="t" style="left:345px;top:128px;font-size:10px;letter-spacing:.3px;color:#10069f">09/26/2021 4:22 PM</span>
  <span class="t" style="left:315px;top:144px;font-size:10px;letter-spacing:.3px;color:#10069f">TO:</span>
  <span class="t" style="left:345px;top:144px;font-size:10px;letter-spacing:.3px;color:#10069f">09/27/2021 4:22 PM</span>
  <svg style="left:463.700px;top:131.700px" width="19" height="19" viewBox="0 0 24 24"><path fill="#10069f" d="M19.140 12.940c.040-.3.060-.610.060-.940 0-.320-.020-.640-.070-.940l2.030-1.580c.18-.14.23-.41.12-.61l-1.920-3.320c-.12-.22-.37-.29-.59-.22l-2.390.96c-.5-.38-1.030-.7-1.620-.94l-.36-2.540c-.04-.24-.24-.41-.48-.41h-3.840c-.24 0-.43.17-.47.41l-.36 2.540c-.59.24-1.130.57-1.620.94l-2.390-.96c-.22-.08-.47 0-.59.22L2.740 8.870c-.12.21-.08.47.12.61l2.030 1.580c-.05.3-.09.63-.09.94s.02.64.07.94l-2.030 1.580c-.18.14-.23.41-.12.610l1.920 3.320c.12.220.37.290.59.220l2.390-.960c.5.380 1.030.7 1.620.940l.36 2.540c.05.240.24.410.48.410h3.840c.24 0 .44-.170.470-.410l.36-2.540c.590-.240 1.130-.560 1.620-.940l2.390.960c.22.080.47 0 .59-.220l1.920-3.320c.12-.220.070-.470-.12-.610l-2.010-1.580zM12 15.600c-1.980 0-3.600-1.620-3.600-3.600s1.620-3.600 3.600-3.600 3.600 1.620 3.600 3.600-1.620 3.600-3.600 3.600z"/></svg>
  <!-- graph card content -->
  <span class="t" style="left:204px;top:201px;font-size:14px;letter-spacing:.1px;color:#4a4a4a">Load graph on Central</span>
  <svg style="left:442px;top:200.700px" width="18" height="18" viewBox="0 0 24 24"><path fill="#10069f" d="M19 19H5V5h7V3H5c-1.110 0-2 .900-2 2v14c0 1.100.890 2 2 2h14c1.100 0 2-.900 2-2v-7h-2v7zM14 3v2h3.590l-9.830 9.830 1.410 1.410L19 6.410V10h2V3h-7z"/></svg>
  <svg style="left:481px;top:200.700px" width="18" height="18" viewBox="0 0 24 24"><path fill="#10069f" d="M19 12v7H5v-7H3v7c0 1.100.900 2 2 2h14c1.100 0 2-.900 2-2v-7h-2zm-6 .670l2.590-2.580L17 11.500l-5 5-5-5 1.410-1.410L11 12.670V3h2z"/></svg>
  <svg style="left:0;top:0" width="544" height="638" viewBox="891 127 544 638" font-family="Liberation Sans, sans-serif"><line x1="987.5" x2="987.5" y1="403" y2="622.6" stroke="#f3f3f3" stroke-width="1"/><line x1="1038.5" x2="1038.5" y1="403" y2="622.6" stroke="#f3f3f3" stroke-width="1"/><line x1="1090.5" x2="1090.5" y1="403" y2="622.6" stroke="#f3f3f3" stroke-width="1"/><line x1="1141.5" x2="1141.5" y1="403" y2="622.6" stroke="#f3f3f3" stroke-width="1"/><line x1="1193.5" x2="1193.5" y1="403" y2="622.6" stroke="#f3f3f3" stroke-width="1"/><line x1="1244.5" x2="1244.5" y1="403" y2="622.6" stroke="#f3f3f3" stroke-width="1"/><line x1="1296.5" x2="1296.5" y1="403" y2="622.6" stroke="#f3f3f3" stroke-width="1"/><line x1="1347.5" x2="1347.5" y1="403" y2="622.6" stroke="#f3f3f3" stroke-width="1"/><path d="M959.7 622.6L960.0 602.5L962.0 605.4L963.9 602.5L966.4 602.1L969.6 590.4L972.0 593.7L974.0 596.2L977.8 602.5L979.5 596.6L981.8 599.5L984.1 597.3L986.1 595.0L988.1 599.5L989.8 604.7L995.0 604.7L997.3 602.5L999.6 604.7L1029.8 604.7L1031.5 598.4L1033.8 604.7L1071.5 604.7L1073.8 597.3L1076.6 589.3L1079.5 601.7L1081.2 602.8L1082.9 595.0L1086.3 586.0L1087.5 580.1L1090.0 578.7L1093.0 567.7L1095.5 577.9L1097.5 589.7L1099.4 600.6L1101.5 603.6L1103.0 602.5L1105.7 604.7L1111.0 604.7L1112.8 602.5L1114.5 604.7L1171.0 604.7L1172.9 599.5L1175.0 604.7L1187.5 604.7L1189.4 595.0L1192.0 603.6L1193.4 602.5L1195.7 589.3L1197.0 590.4L1199.7 585.3L1204.3 591.5L1206.5 599.5L1208.8 599.5L1211.7 604.7L1214.0 604.7L1215.7 592.6L1217.5 604.7L1223.8 604.7L1225.0 598.4L1229.0 598.4L1230.5 604.7L1231.8 604.7L1232.8 600.6L1234.5 600.6L1235.7 604.7L1281.0 604.7L1283.3 586.0L1285.3 600.6L1287.0 604.3L1290.5 604.3L1292.3 597.3L1294.8 603.6L1297.1 602.5L1300.0 604.3L1303.0 604.3L1305.1 594.4L1307.0 604.3L1309.0 593.3L1311.0 575.4L1313.0 580.1L1315.4 581.2L1317.1 589.3L1320.5 583.1L1324.0 595.0L1328.5 604.3L1331.4 602.5L1334.2 596.2L1336.5 604.7L1353.9 604.7L1353.9 622.6L1353.9 622.6 Z" fill="#e8222c" fill-opacity=".2" stroke="#e5262e" stroke-width="1" stroke-linejoin="round"/><path d="M959.7 622.6L960.0 602.5L961.9 610.9L964.7 604.3L967.0 586.0L969.6 570.3L972.1 589.3L973.5 595.0L975.0 592.2L977.5 602.5L979.2 587.5L980.7 590.4L982.1 604.3L983.5 597.3L986.1 584.2L988.1 597.3L989.8 614.5L991.5 619.3L994.4 613.1L997.3 608.3L999.0 615.6L1001.0 606.5L1003.0 613.1L1005.2 613.1L1008.7 618.4L1011.0 619.3L1014.4 608.7L1016.7 618.4L1019.5 600.3L1021.8 618.9L1024.1 613.8L1026.9 618.9L1029.2 618.9L1031.7 601.7L1034.4 618.9L1041.8 618.9L1044.1 617.5L1047.5 619.3L1052.0 619.3L1054.3 617.8L1056.6 614.9L1058.7 610.9L1061.8 618.9L1065.2 613.1L1068.0 618.9L1070.9 618.9L1073.8 597.3L1076.6 559.6L1078.9 588.2L1080.6 601.7L1082.9 595.0L1086.3 561.8L1088.0 580.1L1089.7 586.0L1091.5 553.1L1093.1 535.5L1094.8 560.4L1096.3 589.7L1097.7 610.9L1100.0 615.6L1103.2 610.9L1105.7 617.8L1108.5 614.9L1110.8 618.9L1112.8 602.8L1116.0 611.6L1119.4 619.3L1124.0 619.3L1126.2 614.9L1129.0 619.3L1159.9 619.3L1161.6 602.5L1165.0 616.0L1167.4 613.1L1169.6 614.5L1173.0 599.5L1175.9 617.8L1178.6 614.9L1180.3 618.2L1182.5 614.9L1186.8 619.3L1187.3 618.9L1189.4 595.0L1192.3 605.4L1194.5 582.3L1195.7 564.0L1196.8 579.0L1198.5 564.8L1200.8 577.9L1204.3 591.5L1207.1 602.5L1208.5 598.8L1212.3 617.8L1215.7 592.6L1218.5 611.6L1220.2 619.3L1223.1 618.9L1227.1 595.5L1230.5 613.1L1231.7 618.9L1233.1 600.6L1235.7 619.3L1250.0 619.3L1252.2 614.9L1255.0 619.3L1258.5 618.9L1260.8 617.1L1263.0 618.9L1266.2 614.9L1269.3 619.3L1280.3 619.3L1283.3 586.0L1286.5 616.7L1287.6 618.9L1289.9 618.9L1292.3 597.3L1294.8 604.3L1297.1 602.5L1300.0 604.3L1302.3 610.5L1305.1 594.4L1308.0 614.5L1309.5 586.0L1311.0 557.5L1312.5 575.0L1313.7 586.0L1316.0 588.2L1317.7 593.7L1320.5 583.1L1323.4 595.0L1326.2 592.6L1329.1 604.7L1330.8 604.3L1334.0 596.2L1336.0 608.0L1337.7 618.9L1341.6 618.9L1344.3 610.5L1347.4 618.9L1350.0 613.1L1353.1 618.9L1353.9 622.6L1353.9 622.6 Z" fill="#ee9a3a" fill-opacity=".36" stroke="#dd8630" stroke-width="1" stroke-linejoin="round"/><path d="M959.7 622.6L960.0 588.2L961.3 620.0L963.6 610.9L966.4 615.6L968.1 586.0L969.7 489.0L971.2 586.0L972.1 618.9L974.4 613.1L977.8 607.6L980.7 604.3L982.1 613.1L984.1 604.3L986.1 593.7L988.7 621.9L992.7 621.9L994.4 614.5L999.0 621.9L1001.2 605.4L1003.5 621.9L1005.2 596.6L1008.7 618.9L1012.1 621.9L1013.6 594.4L1016.7 621.9L1017.8 600.6L1019.0 554.9L1020.3 600.6L1021.8 621.9L1024.1 618.9L1028.0 621.9L1031.5 620.8L1036.0 621.9L1044.0 620.0L1046.5 621.9L1058.3 616.7L1061.0 621.9L1065.8 615.6L1069.2 621.9L1072.3 611.6L1074.0 578.7L1075.2 512.8L1076.5 415.1L1077.6 512.8L1078.9 604.3L1080.6 613.1L1082.3 607.6L1084.6 586.0L1085.6 531.1L1086.7 475.5L1087.8 549.4L1089.2 601.7L1090.5 586.0L1092.6 558.9L1094.0 578.7L1095.5 600.6L1097.5 620.8L1100.0 618.2L1104.0 621.5L1108.5 619.7L1110.5 621.5L1113.1 606.9L1116.0 621.1L1119.0 621.5L1124.0 621.9L1126.2 618.9L1128.5 621.9L1159.5 621.9L1161.6 592.6L1164.0 621.1L1166.0 618.2L1169.6 608.7L1171.5 615.3L1173.6 607.6L1176.0 621.5L1179.0 618.9L1181.0 621.5L1186.5 621.9L1188.9 577.2L1191.5 618.2L1193.2 615.3L1194.6 564.0L1195.6 512.8L1196.5 474.7L1197.3 520.1L1198.3 531.1L1199.2 525.2L1200.2 571.4L1201.5 586.0L1202.8 565.1L1204.5 600.6L1206.5 616.0L1209.5 604.3L1212.5 621.1L1214.0 593.3L1215.3 560.0L1216.5 571.4L1218.5 618.9L1221.0 621.5L1225.4 604.3L1228.5 618.2L1231.0 621.5L1233.4 607.6L1235.5 621.1L1237.5 618.9L1239.9 604.7L1243.0 621.5L1250.5 621.9L1252.2 617.1L1254.5 621.9L1264.5 621.9L1266.5 617.1L1268.5 621.9L1280.3 621.9L1282.0 600.6L1283.6 566.6L1285.2 604.3L1286.8 621.9L1289.8 621.9L1292.2 602.8L1294.5 618.2L1297.0 611.6L1299.0 618.9L1299.8 611.6L1301.3 586.4L1302.5 597.0L1304.3 564.4L1306.0 578.7L1307.5 615.3L1308.5 621.9L1310.8 590.4L1312.5 606.1L1314.8 589.7L1316.8 606.1L1318.5 597.0L1320.8 567.3L1322.3 589.7L1323.6 615.3L1324.8 593.3L1326.0 561.5L1327.5 589.7L1328.8 621.9L1330.5 621.9L1332.5 604.3L1334.5 582.3L1336.0 604.3L1337.6 621.9L1341.5 621.9L1344.3 611.6L1346.5 621.9L1348.3 621.9L1350.2 614.5L1352.5 621.1L1353.9 622.6L1353.9 622.6 Z" fill="#f5d23a" fill-opacity=".2" stroke="#f0c62a" stroke-width="1.15" stroke-linejoin="round"/><line x1="959.7" x2="1353.9" y1="622.3" y2="622.3" stroke="#eeb030" stroke-width="1.2"/><line x1="959.5" x2="959.5" y1="403" y2="623.1" stroke="#1c1c1c" stroke-width="1.15"/><line x1="1353.9" x2="1371.6" y1="622.6" y2="622.6" stroke="#222" stroke-width="1.1"/><line x1="956.2" x2="959.7" y1="622.6" y2="622.6" stroke="#222" stroke-width="1"/><text x="955.5" y="626.5" font-size="10" text-anchor="end" fill="#222">0</text><line x1="956.2" x2="959.7" y1="586.0" y2="586.0" stroke="#222" stroke-width="1"/><text x="955.5" y="589.9" font-size="10" text-anchor="end" fill="#222">0.1</text><line x1="956.2" x2="959.7" y1="549.4" y2="549.4" stroke="#222" stroke-width="1"/><text x="955.5" y="553.3" font-size="10" text-anchor="end" fill="#222">0.2</text><line x1="956.2" x2="959.7" y1="512.8" y2="512.8" stroke="#222" stroke-width="1"/><text x="955.5" y="516.7" font-size="10" text-anchor="end" fill="#222">0.3</text><line x1="956.2" x2="959.7" y1="476.2" y2="476.2" stroke="#222" stroke-width="1"/><text x="955.5" y="480.1" font-size="10" text-anchor="end" fill="#222">0.4</text><line x1="956.2" x2="959.7" y1="439.6" y2="439.6" stroke="#222" stroke-width="1"/><text x="955.5" y="443.5" font-size="10" text-anchor="end" fill="#222">0.5</text><line x1="956.2" x2="959.7" y1="403.0" y2="403.0" stroke="#222" stroke-width="1"/><text x="955.5" y="406.9" font-size="10" text-anchor="end" fill="#222">0.6</text><line x1="987.5" x2="987.5" y1="622.6" y2="630.1" stroke="#1c1c1c" stroke-width="1.15"/><text x="987.5" y="641.3" font-size="10" text-anchor="middle" fill="#222">6:00 PM</text><line x1="1038.5" x2="1038.5" y1="622.6" y2="630.1" stroke="#1c1c1c" stroke-width="1.15"/><text x="1038.5" y="641.3" font-size="10" text-anchor="middle" fill="#222">9:00 PM</text><line x1="1090.5" x2="1090.5" y1="622.6" y2="630.1" stroke="#1c1c1c" stroke-width="1.15"/><text x="1090.5" y="641.3" font-size="10" text-anchor="middle" fill="#222">12:00 AM</text><line x1="1141.5" x2="1141.5" y1="622.6" y2="630.1" stroke="#1c1c1c" stroke-width="1.15"/><text x="1141.5" y="641.3" font-size="10" text-anchor="middle" fill="#222">3:00 AM</text><line x1="1193.5" x2="1193.5" y1="622.6" y2="630.1" stroke="#1c1c1c" stroke-width="1.15"/><text x="1193.5" y="641.3" font-size="10" text-anchor="middle" fill="#222">6:00 AM</text><line x1="1244.5" x2="1244.5" y1="622.6" y2="630.1" stroke="#1c1c1c" stroke-width="1.15"/><text x="1244.5" y="641.3" font-size="10" text-anchor="middle" fill="#222">9:00 AM</text><line x1="1296.5" x2="1296.5" y1="622.6" y2="630.1" stroke="#1c1c1c" stroke-width="1.15"/><text x="1296.5" y="641.3" font-size="10" text-anchor="middle" fill="#222">12:00 PM</text><line x1="1347.5" x2="1347.5" y1="622.6" y2="630.1" stroke="#1c1c1c" stroke-width="1.15"/><text x="1347.5" y="641.3" font-size="10" text-anchor="middle" fill="#222">3:00 PM</text></svg>
  <!-- legend -->
  <div class="abs" style="left:28px;top:530px;width:9px;height:44px;background:#e9161f"></div>
  <div class="abs" style="left:195px;top:530px;width:9px;height:44px;background:#dd8027"></div>
  <div class="abs" style="left:363px;top:530px;width:9px;height:44px;background:#f2cb2e"></div>
  <div class="lg" style="left:41px">Average Load Last 15 Minutes<br>Min: <b>N/A</b><span style="margin-left:8px">Max:</span> <b>N/A</b><br>Avg: <b style="font-weight:400;color:#6e6e6e">0.06</b></div>
  <div class="lg" style="left:208px">Average Load Last 5 Minutes<br>Min: <b>N/A</b><span style="margin-left:8px">Max:</span> <b>N/A</b><br>Avg: <b style="font-weight:400;color:#6e6e6e">0.04</b></div>
  <div class="lg" style="left:376px">Average Load Last Minute<br>Min: <b>N/A</b><span style="margin-left:8px">Max:</span> <b>N/A</b><br>Avg: <b style="font-weight:400;color:#6e6e6e">0.04</b></div>
</div>

<!--FOOTER-->
<div id="ftr">
  <span class="t" style="left:314px">Documentation</span><span class="t" style="left:412.4px;top:8.500px;font-weight:400;color:#b9bcc0">|</span>
  <span class="t" style="left:436px">Support</span><span class="t" style="left:496.4px;top:8.500px;font-weight:400;color:#b9bcc0">|</span>
  <span class="t" style="left:519px">Centreon</span><span class="t" style="left:586.4px;top:8.500px;font-weight:400;color:#b9bcc0">|</span>
  <span class="t" style="left:610px">Github Project</span><span class="t" style="left:704.4px;top:8.500px;font-weight:400;color:#b9bcc0">|</span>
  <span class="t" style="left:727px">Slack</span><span class="t" style="left:774.4px;top:8.500px;font-weight:400;color:#b9bcc0">|</span>
  <span class="t" style="left:797px">Security Issue</span>
  <span class="t" style="left:1168px;letter-spacing:-.1px">Copyright © 2005 - 2021</span>
</div>

</body>
</html>
